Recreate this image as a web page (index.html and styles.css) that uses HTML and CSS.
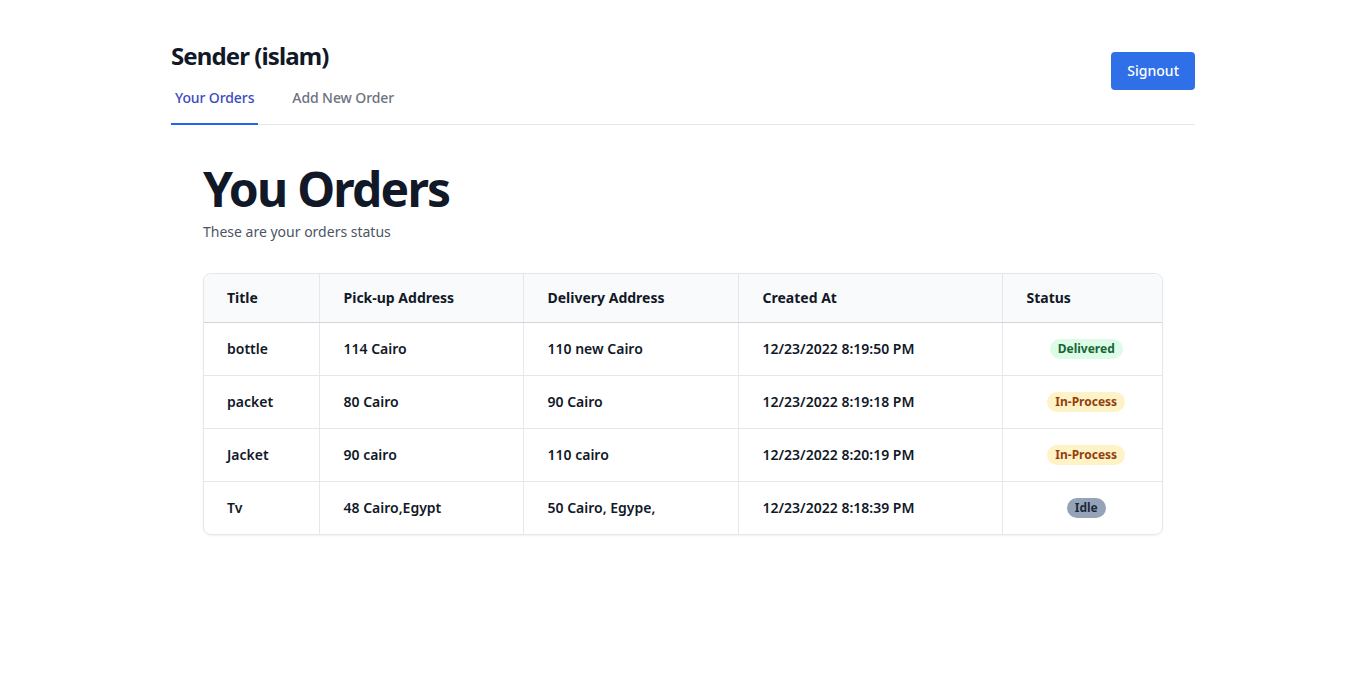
FILE: index.html
```html
<!DOCTYPE html>
<html>
<head>
<meta charset="utf-8">
<link rel="stylesheet" href="styles.css">
</head>
<body>
<div class="page">
  <header class="header">
    <div class="brand">
      <h1 class="title">Sender (islam)</h1>
      <nav class="tabs">
        <a class="tab active">Your Orders</a>
        <a class="tab">Add New Order</a>
      </nav>
    </div>
    <button class="btn">Signout</button>
  </header>
  <main class="main">
    <h2 class="heading">You Orders</h2>
    <p class="sub">These are your orders status</p>
    <div class="card">
      <table class="table">
        <colgroup>
          <col class="c1"><col class="c2"><col class="c3"><col class="c4"><col>
        </colgroup>
        <thead>
          <tr><th>Title</th><th>Pick-up Address</th><th>Delivery Address</th><th>Created At</th><th>Status</th></tr>
        </thead>
        <tbody>
          <tr><td>bottle</td><td>114 Cairo</td><td>110 new Cairo</td><td>12/23/2022 8:19:50 PM</td><td class="st"><span class="badge delivered">Delivered</span></td></tr>
          <tr><td>packet</td><td>80 Cairo</td><td>90 Cairo</td><td>12/23/2022 8:19:18 PM</td><td class="st"><span class="badge process">In-Process</span></td></tr>
          <tr><td>Jacket</td><td>90 cairo</td><td>110 cairo</td><td>12/23/2022 8:20:19 PM</td><td class="st"><span class="badge process">In-Process</span></td></tr>
          <tr><td>Tv</td><td>48 Cairo,Egypt</td><td>50 Cairo, Egype,</td><td>12/23/2022 8:18:39 PM</td><td class="st"><span class="badge idle">Idle</span></td></tr>
        </tbody>
      </table>
    </div>
  </main>
</div>
</body>
</html>
```
FILE: styles.css
```css
* { box-sizing: border-box; }
body {
  margin: 0;
  font-family: "Noto Sans", "Open Sans", sans-serif;
  color: #111827;
  background: #fff;
}
.page {
  max-width: 1024px;
  margin: 0 auto;
}
.header {
  display: flex;
  justify-content: space-between;
  align-items: flex-start;
  padding-top: 40px;
  border-bottom: 1px solid #e5e7eb;
}
.title {
  margin: 0;
  font-size: 24px;
  line-height: 32px;
  font-weight: 700;
  letter-spacing: -0.9px;
  color: #111827;
}
.tabs {
  display: flex;
  gap: 30px;
  margin-top: 4px;
  margin-bottom: -1px;
}
.tab {
  padding: 12px 4px 15px;
  font-size: 14px;
  line-height: 20px;
  font-weight: 500;
  letter-spacing: -0.1px;
  color: #6b7280;
  border-bottom: 2px solid transparent;
}
.tab.active {
  color: #3b4bc0;
  border-bottom-color: #2563eb;
}
.btn {
  margin-top: 12px;
  background: #2f6fe8;
  color: #fff;
  border: 0;
  border-radius: 4px;
  padding: 9px 16px;
  font-family: inherit;
  font-size: 14px;
  line-height: 20px;
  font-weight: 500;
}
.main {
  padding: 40px 32px;
}
.heading {
  margin: 0;
  font-size: 48px;
  line-height: 48px;
  font-weight: 700;
  letter-spacing: -1.8px;
  color: #111827;
}
.sub {
  margin: 9px 0 0;
  font-size: 14px;
  line-height: 20px;
  color: #4b5563;
}
.card {
  margin-top: 31px;
  border: 1px solid #e5e7eb;
  border-radius: 8px;
  overflow: hidden;
  box-shadow: 0 1px 2px rgba(0,0,0,0.06);
}
.table {
  width: 100%;
  border-collapse: collapse;
  table-layout: fixed;
  font-size: 14px;
}
.c1 { width: 115px; }
.c2 { width: 204px; }
.c3 { width: 215px; }
.c4 { width: 264px; }
.table th, .table td {
  text-align: left;
  padding: 0 24px;
  border-left: 1px solid #e5e7eb;
}
.table th:first-child, .table td:first-child { border-left: 0; padding-left: 23px; }
.table th {
  height: 48px;
  background: #f9fafb;
  font-weight: 700;
  border-bottom: 1px solid #d1d5db;
}
.table td {
  height: 53px;
  font-weight: 600;
  border-top: 1px solid #e5e7eb;
}
.table tbody tr:first-child td { border-top: 0; }
.table td.st { text-align: center; padding-left: 32px; }
.badge {
  display: inline-block;
  font-size: 12px;
  line-height: 20px;
  font-weight: 700;
  padding: 0 8px;
  border-radius: 9999px;
}
.delivered { background: #dcfce7; color: #166534; }
.process { background: #fef3c7; color: #92400e; }
.idle { background: #94a3b8; color: #1e293b; }
```
